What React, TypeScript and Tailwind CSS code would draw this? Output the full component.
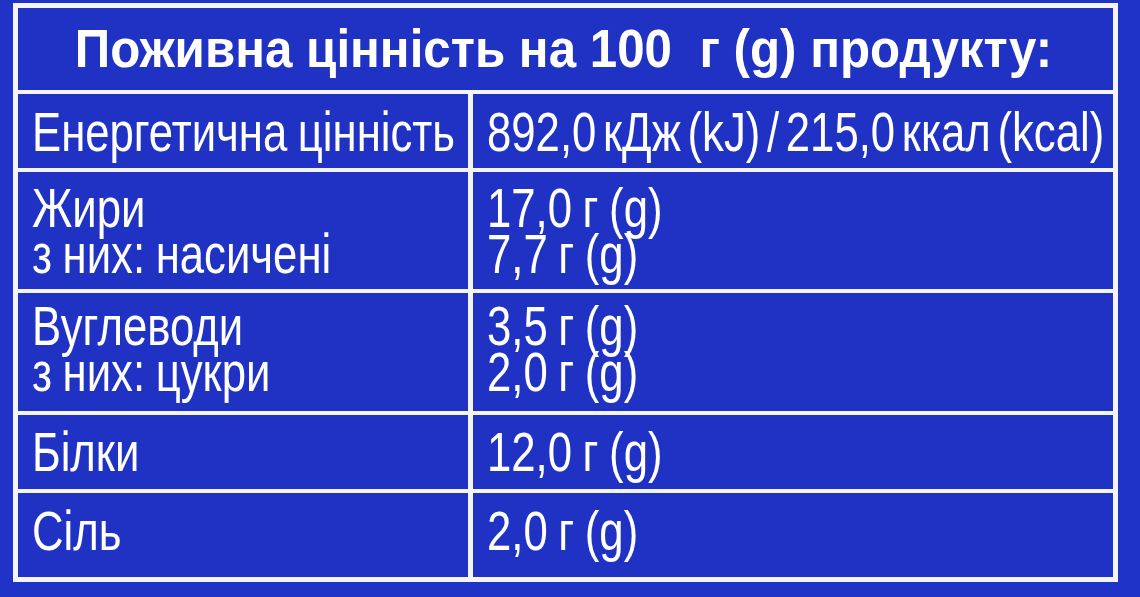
import React from "react"

const font = { fontFamily: '"Liberation Sans", Arial, sans-serif' }

interface Row {
  name: string[]
  value: string[]
  h: string
  pt: string
}

const rows: Row[] = [
  { name: ["Енергетична цінність"], value: ["892,0 кДж (kJ) / 215,0 ккал (kcal)"], h: "h-[74px]", pt: "pt-[15px]" },
  { name: ["Жири", "з них: насичені"], value: ["17,0 г (g)", "7,7 г (g)"], h: "h-[117px]", pt: "pt-[13px]" },
  { name: ["Вуглеводи", "з них: цукри"], value: ["3,5 г (g)", "2,0 г (g)"], h: "h-[118px]", pt: "pt-[10px]" },
  { name: ["Білки"], value: ["12,0 г (g)"], h: "h-[74px]", pt: "pt-[14px]" },
  { name: ["Сіль"], value: ["2,0 г (g)"], h: "h-[84px]", pt: "pt-[15px]" },
]

// condensed look: Liberation Sans squeezed horizontally
function Line({ text }: { text: string }) {
  const long = text.length > 25
  return (
    <div className="h-[46px] whitespace-nowrap">
      <span
        className={
          long
            ? "inline-block origin-left scale-x-[0.78] [word-spacing:-7px]"
            : "inline-block origin-left scale-x-[0.78] [word-spacing:-2px]"
        }
      >
        {text}
      </span>
    </div>
  )
}

export default function App() {
  return (
    <div className="w-[1140px] h-[597px] bg-[#1f33c6] overflow-hidden pt-[3px] pl-[13px]" style={font}>
      <div className="w-[1105px] bg-[#f4f4f6] p-[5px] grid grid-cols-[450px_640px] gap-x-[5px] gap-y-[4px]">
        <div className="col-span-2 h-[82px] bg-[#1f32c4] text-white font-bold text-[53px] leading-[60px] pt-[11px] text-center whitespace-pre">
          <span className="inline-block origin-center scale-x-[0.93] translate-x-[-2px]">Поживна цінність на 100  г (g) продукту:</span>
        </div>
        {rows.map((r) => (
          <React.Fragment key={r.name[0]}>
            <div className={`${r.h} ${r.pt} bg-[#1f32c4] text-white text-[56px] leading-[46px] pl-[14px]`}>
              {r.name.map((l) => (
                <Line key={l} text={l} />
              ))}
            </div>
            <div className={`${r.h} ${r.pt} bg-[#1f32c4] text-white text-[56px] leading-[46px] pl-[14px]`}>
              {r.value.map((l) => (
                <Line key={l} text={l} />
              ))}
            </div>
          </React.Fragment>
        ))}
      </div>
    </div>
  )
}
